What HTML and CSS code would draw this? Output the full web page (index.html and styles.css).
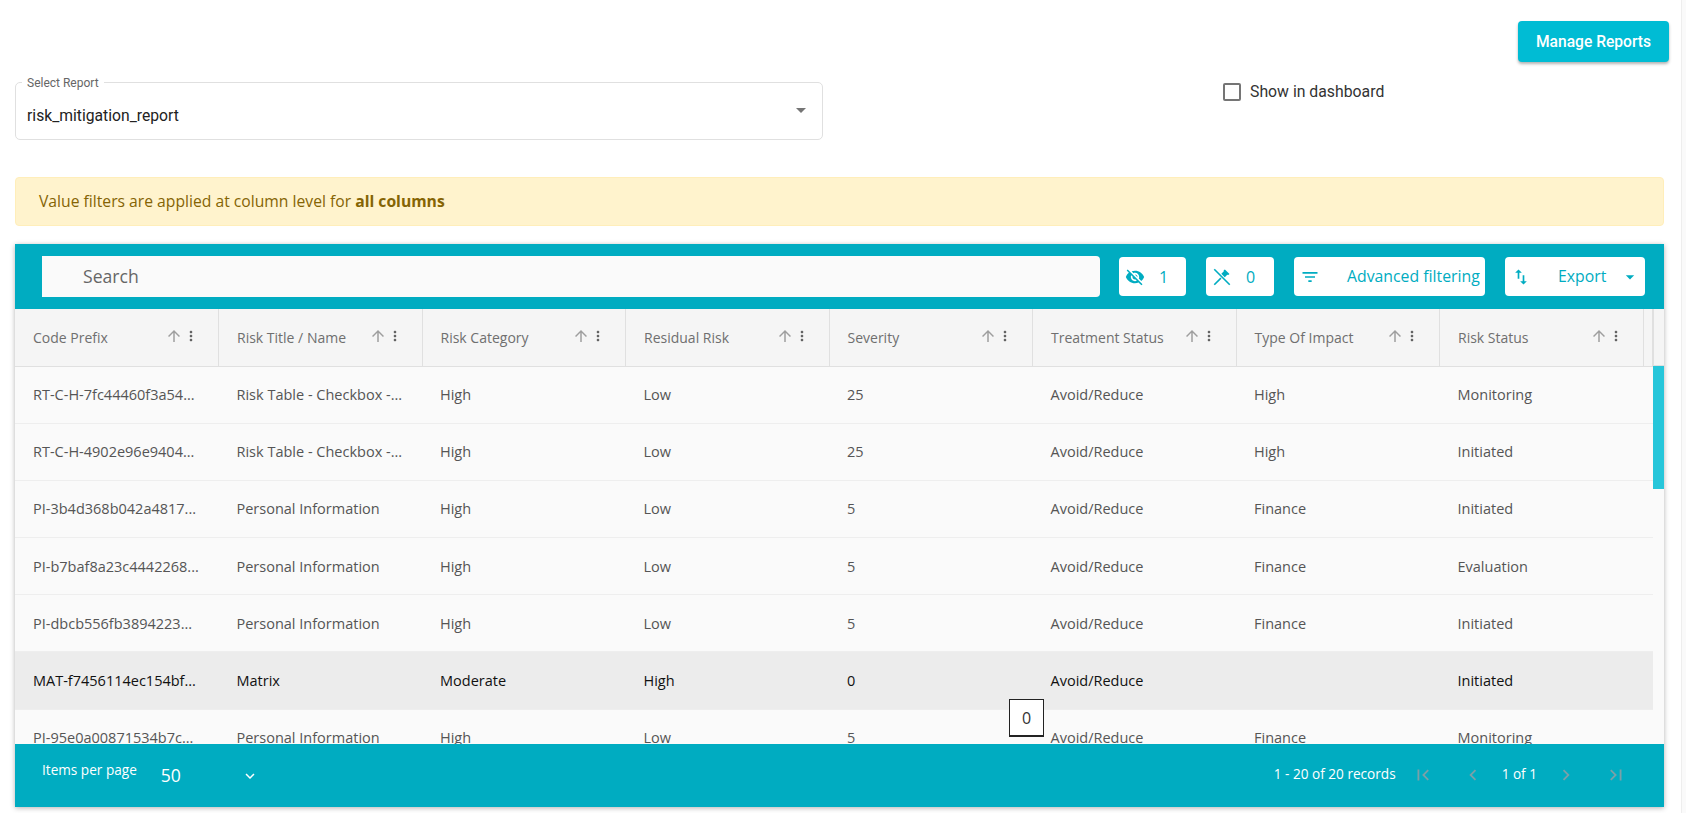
FILE: index.html
```html
<!DOCTYPE html>
<html lang="en">
<head>
  <meta charset="utf-8">
  <title>Reports</title>
  <link rel="stylesheet" href="styles.css">
</head>
<body>
<svg class="icon-sheet" xmlns="http://www.w3.org/2000/svg">
  <symbol id="i-up" viewBox="0 0 24 24"><path d="M4 12l1.41 1.41L11 7.83V20h2V7.83l5.58 5.59L20 12l-8-8-8 8z"/></symbol>
  <symbol id="i-more" viewBox="0 0 24 24"><path d="M12 8c1.1 0 2-.9 2-2s-.9-2-2-2-2 .9-2 2 .9 2 2 2zm0 2c-1.1 0-2 .9-2 2s.9 2 2 2 2-.9 2-2-.9-2-2-2zm0 6c-1.1 0-2 .9-2 2s.9 2 2 2 2-.9 2-2-.9-2-2-2z"/></symbol>
</svg>
<div class="page">
  <div class="content">
    <div class="top-actions">
      <button class="manage-btn">Manage Reports</button>
    </div>

    <div class="report-row">
      <div class="report-select">
        <span class="report-label">Select Report</span>
        <span class="report-value">risk_mitigation_report</span>
        <svg class="report-caret" viewBox="0 0 24 24"><path d="M7 10l5 5 5-5z"/></svg>
      </div>
      <label class="dash-check"><span class="check-box"></span>Show in dashboard</label>
    </div>

    <div class="alert">Value filters are applied at column level for <b>all columns</b></div>

    <div class="grid-card">
      <div class="toolbar">
        <div class="search">Search</div>
        <div class="tool-btn tool-eye">
          <svg class="tool-icon" viewBox="0 0 24 24"><path d="M12 7c2.76 0 5 2.24 5 5 0 .65-.13 1.26-.36 1.83l2.92 2.92c1.51-1.26 2.7-2.89 3.43-4.75-1.73-4.39-6-7.5-11-7.5-1.4 0-2.74.25-3.98.7l2.16 2.16C10.74 7.13 11.35 7 12 7zM2 4.27l2.28 2.28.46.46C3.08 8.3 1.78 10.02 1 12c1.73 4.39 6 7.5 11 7.5 1.55 0 3.03-.3 4.38-.84l.42.42L19.73 22 21 20.73 3.27 3 2 4.27zM7.53 9.8l1.55 1.55c-.05.21-.08.43-.08.65 0 1.66 1.34 3 3 3 .22 0 .44-.03.65-.08l1.55 1.55c-.67.33-1.41.53-2.2.53-2.76 0-5-2.24-5-5 0-.79.2-1.53.53-2.2zm4.31-.78l3.15 3.15.02-.16c0-1.66-1.34-3-3-3l-.17.01z"/></svg>
          <span>1</span>
        </div>
        <div class="tool-btn tool-pin">
          <svg class="tool-icon" viewBox="0 0 24 24"><path d="M3.4 2L22 20.6 20.6 22 2 3.4z"/><path d="M2 20.6l8-8 1.4 1.4-8 8z"/><path d="M15.5 3l5.5 5.5-1.5 1-1.2-.2-3 3-4.1-4.1 3-3-.2-1.2z"/></svg>
          <span>0</span>
        </div>
        <div class="tool-btn tool-filter">
          <svg class="tool-icon" viewBox="0 0 24 24"><path d="M10 18h4v-2h-4v2zM3 6v2h18V6H3zm3 7h12v-2H6v2z"/></svg>
          <span>Advanced filtering</span>
        </div>
        <div class="tool-btn tool-export">
          <svg class="tool-icon" viewBox="0 0 24 24"><path d="M9 3L5 6.99h3V14h2V6.99h3L9 3zm7 14.01V10h-2v7.01h-3L15 21l4-3.99h-3z"/></svg>
          <span>Export</span>
          <svg class="tool-caret" viewBox="0 0 24 24"><path d="M7 10l5 5 5-5z"/></svg>
        </div>
      </div>

      <div class="grid-wrap">
        <div class="grid-main">
          <table class="grid">
            <thead>
              <tr>
                <th><div class="head-cell"><span>Code Prefix</span><svg class="sort"><use href="#i-up"/></svg><svg class="more"><use href="#i-more"/></svg></div></th>
                <th><div class="head-cell"><span>Risk Title / Name</span><svg class="sort"><use href="#i-up"/></svg><svg class="more"><use href="#i-more"/></svg></div></th>
                <th><div class="head-cell"><span>Risk Category</span><svg class="sort"><use href="#i-up"/></svg><svg class="more"><use href="#i-more"/></svg></div></th>
                <th><div class="head-cell"><span>Residual Risk</span><svg class="sort"><use href="#i-up"/></svg><svg class="more"><use href="#i-more"/></svg></div></th>
                <th><div class="head-cell"><span>Severity</span><svg class="sort"><use href="#i-up"/></svg><svg class="more"><use href="#i-more"/></svg></div></th>
                <th><div class="head-cell"><span>Treatment Status</span><svg class="sort"><use href="#i-up"/></svg><svg class="more"><use href="#i-more"/></svg></div></th>
                <th><div class="head-cell"><span>Type Of Impact</span><svg class="sort"><use href="#i-up"/></svg><svg class="more"><use href="#i-more"/></svg></div></th>
                <th><div class="head-cell"><span>Risk Status</span><svg class="sort"><use href="#i-up"/></svg><svg class="more"><use href="#i-more"/></svg></div></th>
                <th class="filler"></th>
              </tr>
            </thead>
            <tbody>
              <tr>
                <td>RT-C-H-7fc44460f3a54...</td><td>Risk Table - Checkbox -...</td><td>High</td><td>Low</td><td>25</td><td>Avoid/Reduce</td><td>High</td><td>Monitoring</td><td></td>
              </tr>
              <tr>
                <td>RT-C-H-4902e96e9404...</td><td>Risk Table - Checkbox -...</td><td>High</td><td>Low</td><td>25</td><td>Avoid/Reduce</td><td>High</td><td>Initiated</td><td></td>
              </tr>
              <tr>
                <td>PI-3b4d368b042a4817...</td><td>Personal Information</td><td>High</td><td>Low</td><td>5</td><td>Avoid/Reduce</td><td>Finance</td><td>Initiated</td><td></td>
              </tr>
              <tr>
                <td>PI-b7baf8a23c4442268...</td><td>Personal Information</td><td>High</td><td>Low</td><td>5</td><td>Avoid/Reduce</td><td>Finance</td><td>Evaluation</td><td></td>
              </tr>
              <tr>
                <td>PI-dbcb556fb3894223...</td><td>Personal Information</td><td>High</td><td>Low</td><td>5</td><td>Avoid/Reduce</td><td>Finance</td><td>Initiated</td><td></td>
              </tr>
              <tr class="row-active">
                <td>MAT-f7456114ec154bf...</td><td>Matrix</td><td>Moderate</td><td>High</td><td>0</td><td>Avoid/Reduce</td><td></td><td>Initiated</td><td></td>
              </tr>
              <tr>
                <td>PI-95e0a00871534b7c...</td><td>Personal Information</td><td>High</td><td>Low</td><td>5</td><td>Avoid/Reduce</td><td>Finance</td><td>Monitoring</td><td></td>
              </tr>
            </tbody>
          </table>
        </div>
        <div class="grid-scroll">
          <div class="scroll-head"></div>
          <div class="scroll-thumb"></div>
        </div>
      </div>

      <div class="pager">
        <span class="pager-label">Items per page</span>
        <span class="pager-size">50</span>
        <svg class="pager-chevron" viewBox="0 0 24 24"><path d="M7.41 8.59L12 13.17l4.59-4.58L18 10l-6 6-6-6z"/></svg>
        <span class="pager-records">1 - 20 of 20 records</span>
        <svg class="pager-icon" viewBox="0 0 24 24"><path d="M18.41 16.59L13.82 12l4.59-4.59L17 6l-6 6 6 6zM6 6h2v12H6z"/></svg>
        <svg class="pager-icon" viewBox="0 0 24 24"><path d="M15.41 7.41L14 6l-6 6 6 6 1.41-1.41L10.83 12z"/></svg>
        <span class="pager-page">1 of 1</span>
        <svg class="pager-icon" viewBox="0 0 24 24"><path d="M10 6L8.59 7.41 13.17 12l-4.58 4.59L10 18l6-6z"/></svg>
        <svg class="pager-icon" viewBox="0 0 24 24"><path d="M5.59 7.41L10.18 12l-4.59 4.59L7 18l6-6-6-6zM16 6h2v12h-2z"/></svg>
      </div>

      <div class="cell-tip">0</div>
    </div>
  </div>
  <div class="page-scroll"></div>
</div>
</body>
</html>
```

FILE: styles.css
```css
* {
  box-sizing: border-box;
}

html, body {
  margin: 0;
  height: 100%;
  overflow: hidden;
  background: #fff;
}

body {
  font-family: "Open Sans", "Noto Sans", sans-serif;
  font-size: 14px;
  color: #555;
}

.icon-sheet {
  display: none;
}

.page {
  display: flex;
  height: 813px;
}

.content {
  flex: 1;
  padding: 21px 0 0 15px;
}

.page-scroll {
  width: 5px;
  background: #fafafa;
  border-left: 1px solid #eee;
}

.top-actions {
  display: flex;
  justify-content: flex-end;
  padding-right: 12px;
}

.manage-btn {
  width: 151px;
  height: 41px;
  border: 0;
  border-radius: 4px;
  background: #00bcd4;
  color: #fff;
  font-family: Roboto, sans-serif;
  font-size: 15.6px;
  font-weight: 500;
  box-shadow: 0 2px 3px rgba(0, 0, 0, .3);
}

.report-row {
  display: flex;
  align-items: flex-start;
  margin-top: 20px;
}

.report-select {
  position: relative;
  display: flex;
  align-items: center;
  justify-content: space-between;
  width: 808px;
  height: 58px;
  padding: 8px 14px 0 11px;
  border: 1px solid #e0e0e0;
  border-radius: 5px;
}

.report-label {
  position: absolute;
  top: -7px;
  left: 6px;
  padding: 0 5px;
  background: #fff;
  color: #666;
  font-family: Roboto, sans-serif;
  font-size: 12px;
  line-height: 14px;
}

.report-value {
  color: #222;
  font-family: Roboto, sans-serif;
  font-size: 15.7px;
}

.report-caret {
  width: 24px;
  height: 24px;
  margin: -10px -5px 0 0;
  fill: #757575;
}

.dash-check {
  display: flex;
  align-items: center;
  gap: 9px;
  margin: 0 0 0 400px;
  padding-top: 1px;
  color: #333;
  font-family: Roboto, sans-serif;
  font-size: 15.8px;
  line-height: 18px;
}

.check-box {
  width: 18px;
  height: 18px;
  border: 2px solid #757575;
  border-radius: 2px;
}

.alert {
  width: 1649px;
  height: 49px;
  margin-top: 37px;
  padding-left: 23px;
  border: 1px solid #ffeeba;
  border-radius: 4px;
  background: #fff3cd;
  color: #856404;
  font-size: 15.7px;
  line-height: 46px;
}

.alert b {
  font-weight: 700;
}

.grid-card {
  position: relative;
  width: 1649px;
  margin-top: 18px;
  box-shadow: 0 1px 5px rgba(0, 0, 0, .3);
}

.toolbar {
  display: flex;
  align-items: center;
  gap: 20px;
  height: 65px;
  padding: 0 19px 0 27px;
  background: #00acc1;
}

.search {
  flex: 1;
  height: 41px;
  margin-right: -1px;
  padding-left: 41px;
  border-radius: 0 4px 4px 0;
  background: #fafafa;
  color: #666;
  font-size: 17.6px;
  line-height: 41px;
}

.tool-btn {
  display: flex;
  align-items: center;
  height: 39px;
  padding-left: 6px;
  border-radius: 4px;
  background: #fff;
  color: #00acc1;
  font-size: 16px;
}

.tool-icon {
  flex: none;
  width: 20px;
  height: 20px;
  fill: #00acc1;
}

.tool-eye {
  width: 67px;
  gap: 14px;
}

.tool-pin {
  width: 68px;
  gap: 14px;
}

.tool-filter {
  width: 191px;
  gap: 27px;
  font-size: 15.8px;
}

.tool-filter span,
.tool-export span {
  margin-top: -2px;
  white-space: nowrap;
}

.tool-export {
  width: 140px;
  gap: 27px;
  font-size: 15.8px;
}

.tool-caret {
  flex: none;
  width: 20px;
  height: 20px;
  margin-left: -13px;
  fill: #00acc1;
}

.grid-wrap {
  display: flex;
  height: 435px;
}

.grid-main {
  flex: 1;
  min-width: 0;
  overflow: hidden;
}

.grid {
  width: 100%;
  table-layout: fixed;
  border-collapse: collapse;
}

.grid th {
  width: 203.5px;
  height: 57px;
  padding: 0 0 0 18px;
  border-right: 1px solid #e0e0e0;
  border-bottom: 1px solid #e0e0e0;
  background: #f5f5f5;
  color: #6f6f6f;
  font-size: 14px;
  font-weight: 500;
  text-align: left;
}

.grid th.filler {
  width: auto;
  padding: 0;
}

.head-cell {
  display: flex;
  align-items: center;
  padding-right: 19px;
}

.head-cell span {
  flex: 1;
  white-space: nowrap;
}

.sort {
  width: 18px;
  height: 18px;
  margin-top: -3px;
  fill: #9e9e9e;
}

.more {
  width: 16px;
  height: 16px;
  margin-top: -3px;
  fill: #616161;
}

.grid td {
  height: 57.2px;
  padding: 0 0 0 18px;
  overflow: hidden;
  border-bottom: 1px solid #eee;
  background: #fafafa;
  color: #555;
  font-size: 14.5px;
  white-space: nowrap;
}

.grid .row-active td {
  background: #ececec;
  color: #111;
}

.grid-scroll {
  width: 11px;
  background: #fafafa;
}

.scroll-head {
  height: 57px;
  border-bottom: 1px solid #e0e0e0;
  border-left: 1px solid #e0e0e0;
  background: #f5f5f5;
}

.scroll-thumb {
  height: 123px;
  background: #26c6da;
}

.pager {
  display: flex;
  align-items: center;
  height: 63px;
  padding: 0 37px 0 27px;
  background: #00acc1;
  color: #fff;
  font-size: 13.6px;
}

.pager-label {
  margin-top: -13px;
}

.pager-size {
  margin: -2px 0 0 24px;
  font-size: 17.6px;
}

.pager-chevron {
  width: 18px;
  height: 18px;
  margin-left: 60px;
  fill: #fff;
}

.pager-records {
  margin: -4px -12px 0 auto;
}

.pager-icon {
  width: 22px;
  height: 22px;
  margin: -2px 0 0 28px;
  fill: #7ba0a8;
}

.pager-page {
  margin: -4px -10px 0 18px;
}

.cell-tip {
  position: absolute;
  top: 455px;
  left: 994px;
  width: 35px;
  height: 38px;
  border: 1px solid #222;
  border-bottom-width: 2px;
  background: #fff;
  color: #333;
  font-size: 16px;
  line-height: 36px;
  text-align: center;
}
```
